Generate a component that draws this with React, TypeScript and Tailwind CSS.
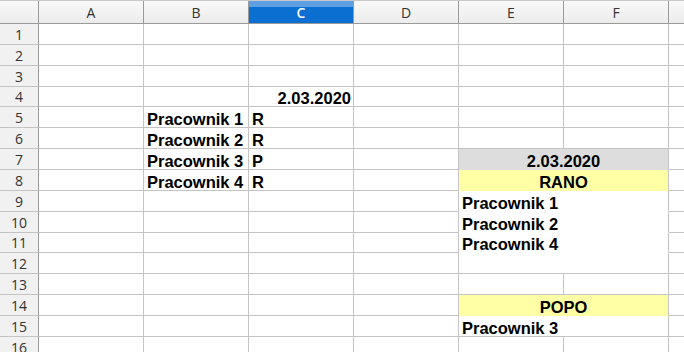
import React from 'react';

type Cell = {
  text?: string;
  align?: 'left' | 'right' | 'center';
  fill?: 'gray' | 'yellow' | 'white';
  wide?: boolean;
  spell?: boolean;
  noBottom?: boolean;
};

const COLS = ['A', 'B', 'C', 'D', 'E', 'F', 'G'];

// rows that need merged E:F cells
const merged: Record<number, Cell> = {
  7: { text: '2.03.2020', align: 'center', fill: 'gray', noBottom: true },
  8: { text: 'RANO', align: 'center', fill: 'yellow', noBottom: true },
  9: { text: 'Pracownik 1', fill: 'white', noBottom: true },
  10: { text: 'Pracownik 2', fill: 'white', noBottom: true },
  11: { text: 'Pracownik 4', fill: 'white', noBottom: true },
  12: { fill: 'white' },
  14: { text: 'POPO', align: 'center', fill: 'yellow', spell: true, noBottom: true },
  15: { text: 'Pracownik 3', fill: 'white' },
};

const plain: Record<string, Cell> = {
  '4C': { text: '2.03.2020', align: 'right' },
  '5B': { text: 'Pracownik 1' },
  '5C': { text: 'R' },
  '6B': { text: 'Pracownik 2' },
  '6C': { text: 'R' },
  '7B': { text: 'Pracownik 3' },
  '7C': { text: 'P' },
  '8B': { text: 'Pracownik 4' },
  '8C': { text: 'R' },
};

const GridCell = ({ cell }: { cell?: Cell }) => {
  const c = cell || {};
  const fill =
    c.fill === 'gray' ? 'bg-[#dddddd]' : c.fill === 'yellow' ? 'bg-[#ffffa6]' : 'bg-white';
  const justify =
    c.align === 'right' ? 'justify-end pr-[2px]' : c.align === 'center' ? 'justify-center' : 'justify-start pl-[3px]';
  return (
    <div
      className={`${c.wide ? 'w-[210px]' : 'w-[105px]'} shrink-0 h-full flex items-end border-r border-b ${
        c.noBottom ? 'border-b-transparent' : 'border-b-[#c4c4c4]'
      } border-r-[#c4c4c4] ${fill} ${justify} overflow-visible whitespace-nowrap`}
    >
      {c.text && (
        <span
          className={`leading-none font-bold text-[16.5px] text-black ${
            c.spell ? 'underline decoration-wavy decoration-[#e02020] decoration-1 underline-offset-[3px]' : ''
          }`}
        >
          {c.text}
        </span>
      )}
    </div>
  );
};

export default function App() {
  const rows = Array.from({ length: 16 }, (_, i) => i + 1);

  return (
    <div className="w-[684px] h-[352px] overflow-hidden bg-white font-['Liberation_Sans',Arial,sans-serif]">
      {/* Column headers */}
      <div className="flex h-[24px] border-t border-b border-t-[#c8c8c8] border-b-[#9a9a9a] font-['Open_Sans',sans-serif] text-[14px] text-[#333]">
        <div className="w-[39px] shrink-0 border-r border-r-[#9a9a9a] bg-linear-to-b from-[#f9f9f9] to-[#ececec]" />
        {COLS.map((col) =>
          col === 'C' ? (
            <div
              key={col}
              className="w-[105px] shrink-0 border-r border-r-[#9a9a9a] flex items-center justify-center text-white font-semibold bg-[linear-gradient(to_bottom,#5fa0e2_0px,#5fa0e2_6px,#0b6fd1_6px)]"
            >
              {col}
            </div>
          ) : (
            <div
              key={col}
              className="w-[105px] shrink-0 border-r border-r-[#9a9a9a] flex items-center justify-center bg-linear-to-b from-[#f9f9f9] to-[#ececec]"
            >
              {col}
            </div>
          )
        )}
      </div>

      {/* Rows */}
      {rows.map((r) => {
        const short = r === 4 || r === 11;
        const m = merged[r];
        return (
          <div key={r} className={`flex ${short ? 'h-[20px]' : 'h-[21px]'}`}>
            <div className="w-[39px] shrink-0 border-r border-b border-r-[#9a9a9a] border-b-[#c4c4c4] bg-[#f1f1f1] flex items-center justify-center font-['Open_Sans',sans-serif] text-[14px] text-[#333]">
              {r}
            </div>
            {COLS.map((col) => {
              if (m && col === 'E') return <GridCell key={col} cell={{ ...m, wide: true }} />;
              if (m && col === 'F') return null;
              return <GridCell key={col} cell={plain[`${r}${col}`]} />;
            })}
          </div>
        );
      })}
    </div>
  );
}
